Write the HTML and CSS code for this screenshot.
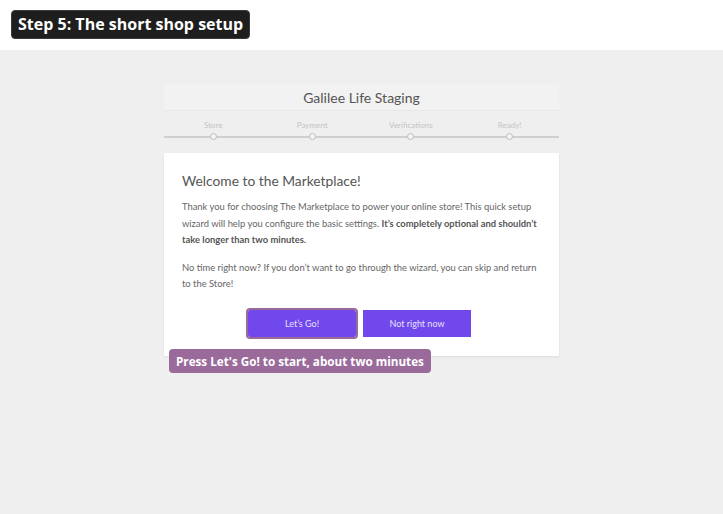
FILE: index.html
```html
<!DOCTYPE html>
<html>
<head>
<meta charset="utf-8">
<link rel="stylesheet" href="styles.css">
</head>
<body>
<div class="topbar">
  <span class="tag">Step 5: The short shop setup</span>
</div>
<div class="main">
  <div class="wizard">
    <div class="head">
      <div class="title">Galilee Life Staging</div>
    </div>
    <div class="steps">
      <div class="step"><span class="label">Store</span><span class="dot"></span></div>
      <div class="step"><span class="label">Payment</span><span class="dot"></span></div>
      <div class="step"><span class="label">Verifications</span><span class="dot"></span></div>
      <div class="step"><span class="label">Ready!</span><span class="dot"></span></div>
    </div>
    <div class="card">
      <h1 class="heading">Welcome to the Marketplace!</h1>
      <p class="text">Thank you for choosing The Marketplace to power your online store! This quick setup wizard will help you configure the basic settings. <strong>It’s completely optional and shouldn’t take longer than two minutes.</strong></p>
      <p class="text">No time right now? If you don’t want to go through the wizard, you can skip and return to the Store!</p>
      <div class="actions">
        <button class="btn btn-focus">Let’s Go!</button>
        <button class="btn">Not right now</button>
      </div>
      <div class="note">Press Let's Go! to start, about two minutes</div>
    </div>
  </div>
</div>
</body>
</html>
```
FILE: styles.css
```css
html, body {
  margin: 0;
  padding: 0;
  height: 100%;
}
body {
  font-family: "Lato", "Open Sans", sans-serif;
  background: #efefef;
  color: #666;
}
.topbar {
  height: 50px;
  background: #ffffff;
  padding: 10px 0 0 11px;
  box-sizing: border-box;
}
.tag {
  display: inline-block;
  background: #1e1e1e;
  color: #ffffff;
  font-family: "Open Sans", sans-serif;
  font-weight: 700;
  font-size: 16px;
  line-height: 27px;
  padding: 0 6px;
  border-radius: 4px;
  border: 1px solid #3a3a3a;
}
.main {
  padding-top: 34px;
}
.wizard {
  width: 395px;
  margin: 0 auto;
}
.head {
  background: #f2f2f2;
  border-bottom: 1px solid #e7e7e7;
  padding: 4px 0 2px;
}
.title {
  text-align: center;
  font-size: 14px;
  line-height: 20px;
  color: #555;
}
.steps {
  display: grid;
  grid-template-columns: repeat(4, 1fr);
  background: linear-gradient(#cfcfcf, #cfcfcf) 0 25px / 100% 2px no-repeat;
  padding-top: 9px;
  height: 42px;
  box-sizing: border-box;
}
.step {
  display: flex;
  flex-direction: column;
  align-items: center;
}
.label {
  font-size: 8px;
  line-height: 11px;
  color: #c4c4c4;
}
.dot {
  width: 5px;
  height: 5px;
  margin-top: 2px;
  border: 1.5px solid #bdbdbd;
  border-radius: 50%;
  background: #f4f4f4;
}
.card {
  position: relative;
  background: #ffffff;
  padding: 17px 18px 19px;
  box-shadow: 0 1px 2px rgba(0,0,0,0.08);
}
.heading {
  margin: 0;
  font-weight: 400;
  font-size: 13.8px;
  line-height: 22px;
  color: #555;
}
.text {
  margin: 7px 0 0;
  font-size: 9.4px;
  line-height: 16.5px;
  color: #666;
}
.text + .text {
  margin-top: 11px;
}
.text strong {
  color: #555;
  font-weight: 700;
}
.actions {
  display: flex;
  justify-content: center;
  gap: 7px;
  margin-top: 17px;
  padding-right: 4px;
}
.btn {
  width: 108px;
  height: 27px;
  border: none;
  background: #7048ec;
  color: #e8e0ff;
  font-family: "Lato", sans-serif;
  font-size: 9px;
  padding: 0;
}
.btn-focus {
  outline: 2px solid #9a6a9b;
  border-radius: 2px;
}
.note {
  position: absolute;
  left: 5px;
  top: 196px;
  background: #9a6a9b;
  color: #ffffff;
  font-family: "Open Sans", sans-serif;
  font-weight: 700;
  font-size: 11.7px;
  line-height: 24px;
  padding: 0 7px;
  border-radius: 4px;
  white-space: nowrap;
}
```
